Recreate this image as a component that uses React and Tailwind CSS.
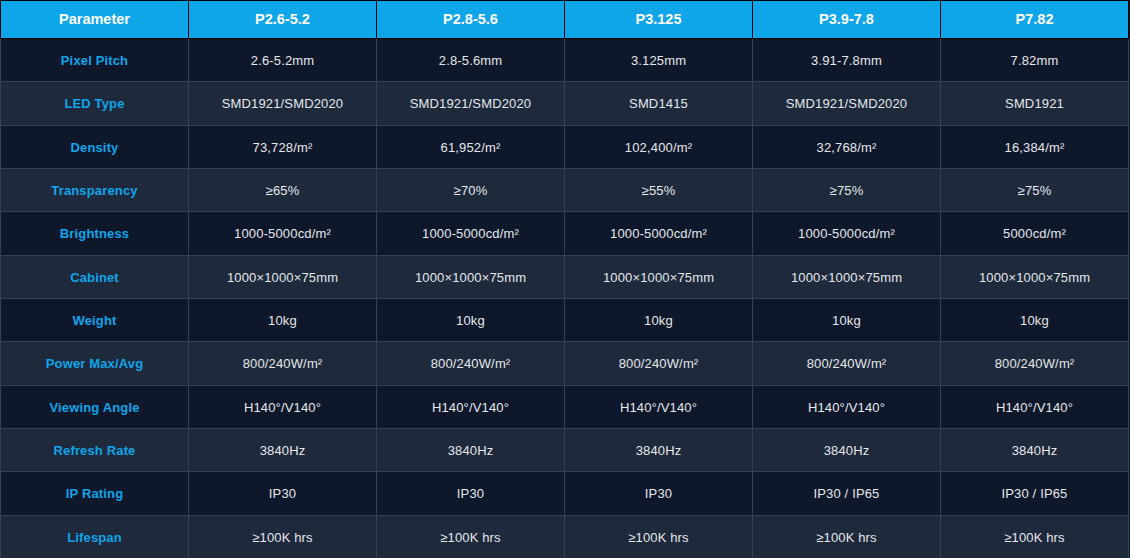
import React from 'react';

const models = ['P2.6-5.2', 'P2.8-5.6', 'P3.125', 'P3.9-7.8', 'P7.82'];

const specs = [
  ['Pixel Pitch', ['2.6-5.2mm', '2.8-5.6mm', '3.125mm', '3.91-7.8mm', '7.82mm']],
  ['LED Type', ['SMD1921/SMD2020', 'SMD1921/SMD2020', 'SMD1415', 'SMD1921/SMD2020', 'SMD1921']],
  ['Density', ['73,728/m²', '61,952/m²', '102,400/m²', '32,768/m²', '16,384/m²']],
  ['Transparency', ['≥65%', '≥70%', '≥55%', '≥75%', '≥75%']],
  ['Brightness', ['1000-5000cd/m²', '1000-5000cd/m²', '1000-5000cd/m²', '1000-5000cd/m²', '5000cd/m²']],
  ['Cabinet', ['1000×1000×75mm', '1000×1000×75mm', '1000×1000×75mm', '1000×1000×75mm', '1000×1000×75mm']],
  ['Weight', ['10kg', '10kg', '10kg', '10kg', '10kg']],
  ['Power Max/Avg', ['800/240W/m²', '800/240W/m²', '800/240W/m²', '800/240W/m²', '800/240W/m²']],
  ['Viewing Angle', ['H140°/V140°', 'H140°/V140°', 'H140°/V140°', 'H140°/V140°', 'H140°/V140°']],
  ['Refresh Rate', ['3840Hz', '3840Hz', '3840Hz', '3840Hz', '3840Hz']],
  ['IP Rating', ['IP30', 'IP30', 'IP30', 'IP30 / IP65', 'IP30 / IP65']],
  ['Lifespan', ['≥100K hrs', '≥100K hrs', '≥100K hrs', '≥100K hrs', '≥100K hrs']],
];

function App() {
  return (
    <div className="w-[1130px] h-[558px] bg-[#0f172a] font-['Liberation_Sans',Arial,sans-serif]">
      <table className="w-[1129px] table-fixed border-collapse text-center">
        <thead>
          <tr className="h-[38px] bg-[#0ea5e9]">
            <th className="border border-black pt-px text-[14.5px] font-bold text-white">Parameter</th>
            {models.map((m) => (
              <th key={m} className="border border-black pt-px text-[14.5px] font-bold text-white">
                {m}
              </th>
            ))}
          </tr>
        </thead>
        <tbody>
          {specs.map(([label, values], i) => (
            <tr key={label} className={`h-[43.33px] ${i % 2 === 0 ? 'bg-[#0f172a]' : 'bg-[#1e293b]'}`}>
              <td className="border border-[#334155] pt-px text-[13px] font-bold tracking-[0.15px] text-[#0ea5e9]">{label}</td>
              {values.map((v, j) => (
                <td key={j} className="border border-[#334155] pt-px text-[13px] tracking-[0.15px] text-[#e5e7eb]">
                  {v}
                </td>
              ))}
            </tr>
          ))}
        </tbody>
      </table>
    </div>
  );
}

export default App;
